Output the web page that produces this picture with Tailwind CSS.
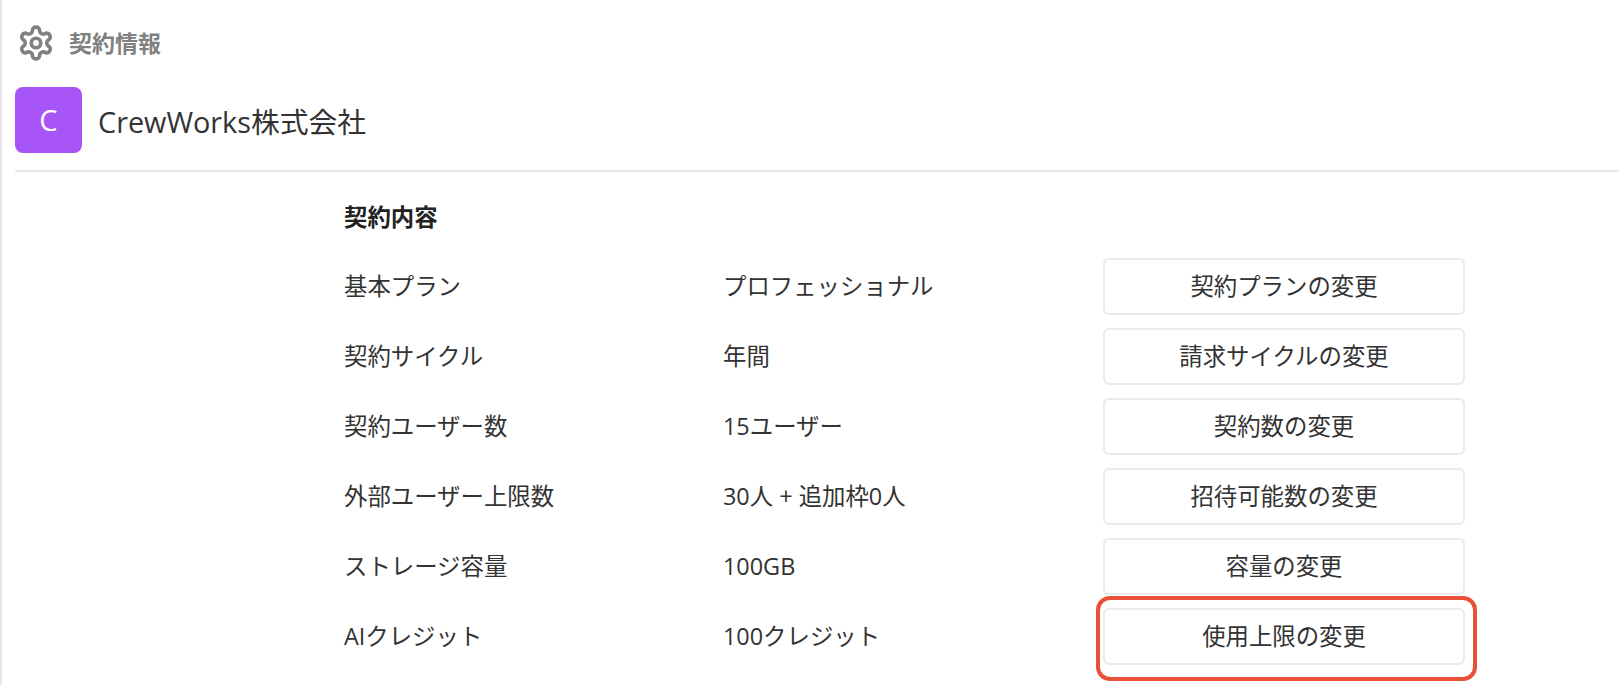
<!DOCTYPE html>
<html lang="ja">
<head>
    <meta charset="UTF-8">
    <title>契約情報</title>
    <script src="https://cdn.jsdelivr.net/npm/@tailwindcss/browser@4"></script>
</head>
<body class="bg-white overflow-hidden font-['Open_Sans','Noto_Sans_CJK_JP',sans-serif] text-[#333]">
    <div class="h-[685px] border-l-2 border-[#e8e8e8] pl-[13px]">
        <!-- ページタイトル -->
        <header class="flex items-center h-[87px] pl-[2px] pb-[1px] gap-[14px]">
            <svg class="w-[38px] h-[38px] text-[#808080]" fill="none" stroke="currentColor" stroke-width="2.3" viewBox="0 0 24 24" stroke-linecap="round" stroke-linejoin="round">
                <path d="M12.22 2h-.44a2 2 0 0 0-2 2v.18a2 2 0 0 1-1 1.73l-.43.25a2 2 0 0 1-2 0l-.15-.08a2 2 0 0 0-2.73.73l-.22.38a2 2 0 0 0 .73 2.73l.15.1a2 2 0 0 1 1 1.72v.51a2 2 0 0 1-1 1.74l-.15.09a2 2 0 0 0-.73 2.73l.22.38a2 2 0 0 0 2.73.73l.15-.08a2 2 0 0 1 2 0l.43.25a2 2 0 0 1 1 1.73V20a2 2 0 0 0 2 2h.44a2 2 0 0 0 2-2v-.18a2 2 0 0 1 1-1.73l.43-.25a2 2 0 0 1 2 0l.15.08a2 2 0 0 0 2.73-.73l.22-.39a2 2 0 0 0-.73-2.73l-.15-.08a2 2 0 0 1-1-1.74v-.5a2 2 0 0 1 1-1.74l.15-.09a2 2 0 0 0 .73-2.73l-.22-.38a2 2 0 0 0-2.73-.73l-.15.08a2 2 0 0 1-2 0l-.43-.25a2 2 0 0 1-1-1.73V4a2 2 0 0 0-2-2z"></path>
                <circle cx="12" cy="12" r="3"></circle>
            </svg>
            <h1 class="text-[23px] font-bold text-[#808080]">契約情報</h1>
        </header>

        <!-- 会社名 -->
        <div class="flex items-center h-[84px] mt-[1px] pb-[18px] border-b-2 border-[#e8e8e8] gap-[16px]">
            <div class="w-[67px] h-[66px] rounded-[8px] bg-[#a855f7] text-white text-[29px] flex items-center justify-center">C</div>
            <div class="text-[28.8px] text-[#333] mt-[3px]">CrewWorks株式会社</div>
        </div>

        <!-- 契約内容 -->
        <main class="pl-[329px] pt-[25px] text-[23.4px]">
            <h2 class="font-bold text-[#222] leading-[40px] mb-[21px]">契約内容</h2>
            <div class="flex flex-col gap-[13px]">
                <div class="flex items-center h-[57px]">
                    <div class="w-[379px] pt-[1px]">基本プラン</div>
                    <div class="w-[380px] pt-[1px]">プロフェッショナル</div>
                    <button class="w-[362px] h-[57px] bg-white border-2 border-[#ebebeb] rounded-[6px]">契約プランの変更</button>
                </div>
                <div class="flex items-center h-[57px]">
                    <div class="w-[379px] pt-[1px]">契約サイクル</div>
                    <div class="w-[380px] pt-[1px]">年間</div>
                    <button class="w-[362px] h-[57px] bg-white border-2 border-[#ebebeb] rounded-[6px]">請求サイクルの変更</button>
                </div>
                <div class="flex items-center h-[57px]">
                    <div class="w-[379px] pt-[1px]">契約ユーザー数</div>
                    <div class="w-[380px] pt-[1px]">15ユーザー</div>
                    <button class="w-[362px] h-[57px] bg-white border-2 border-[#ebebeb] rounded-[6px]">契約数の変更</button>
                </div>
                <div class="flex items-center h-[57px]">
                    <div class="w-[379px] pt-[1px]">外部ユーザー上限数</div>
                    <div class="w-[380px] pt-[1px]">30人 + 追加枠0人</div>
                    <button class="w-[362px] h-[57px] bg-white border-2 border-[#ebebeb] rounded-[6px]">招待可能数の変更</button>
                </div>
                <div class="flex items-center h-[57px]">
                    <div class="w-[379px] pt-[1px]">ストレージ容量</div>
                    <div class="w-[380px] pt-[1px]">100GB</div>
                    <button class="w-[362px] h-[57px] bg-white border-2 border-[#ebebeb] rounded-[6px]">容量の変更</button>
                </div>
                <div class="flex items-center h-[57px]">
                    <div class="w-[379px] pt-[1px]">AIクレジット</div>
                    <div class="w-[380px] pt-[1px]">100クレジット</div>
                    <div class="relative">
                        <button class="w-[362px] h-[57px] bg-white border-2 border-[#ebebeb] rounded-[6px]">使用上限の変更</button>
                        <!-- 注釈の赤枠 -->
                        <div class="absolute -left-[7px] -right-[12px] -top-[12px] -bottom-[16px] border-4 border-[#e8503a] rounded-[14px]"></div>
                    </div>
                </div>
            </div>
        </main>
    </div>
</body>
</html>
